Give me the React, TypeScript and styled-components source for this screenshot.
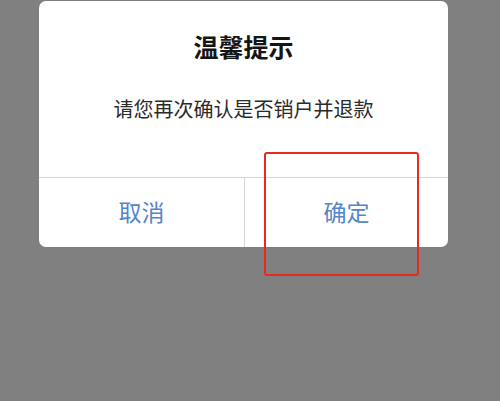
import React from "react";
import styled, { createGlobalStyle } from "styled-components";

const GlobalStyle = createGlobalStyle`
  html, body {
    margin: 0;
    padding: 0;
    background: #808080;
  }
  body {
    font-family: "Noto Sans CJK SC", "Noto Sans", sans-serif;
  }
`;

const Page = styled.div`
  position: relative;
  width: 500px;
  height: 401px;
  background: #808080;
  display: flex;
  justify-content: center;
  align-items: flex-start;
  overflow: hidden;
`;

const Dialog = styled.div`
  margin-top: 1px;
  margin-left: -13px;
  width: 409px;
  background: #ffffff;
  border-radius: 7px;
  display: flex;
  flex-direction: column;
  overflow: hidden;
`;

const Body = styled.div`
  height: 176px;
  display: flex;
  flex-direction: column;
  align-items: center;
  box-sizing: border-box;
  padding-top: 33px;
`;

const Title = styled.div`
  font-size: 25px;
  line-height: 25px;
  font-weight: 600;
  color: #151515;
`;

const Message = styled.div`
  margin-top: 40px;
  font-size: 20px;
  line-height: 20px;
  color: #2a2a2a;
`;

const Footer = styled.div`
  display: grid;
  grid-template-columns: 205px 1fr;
  height: 70px;
  border-top: 1px solid #d6d6d6;
  box-sizing: border-box;
`;

const ActionButton = styled.button<{ $divider?: boolean }>`
  appearance: none;
  background: transparent;
  border: none;
  border-left: ${(p) => (p.$divider ? "1px solid #d6d6d6" : "none")};
  margin: 0;
  padding: 0 0 3px 0;
  font-family: inherit;
  font-size: 23px;
  line-height: 23px;
  color: #5485c8;
  display: flex;
  align-items: center;
  justify-content: center;
  cursor: pointer;
`;

const Highlight = styled.div`
  position: absolute;
  left: 264px;
  top: 152px;
  width: 155px;
  height: 124px;
  box-sizing: border-box;
  border: 2px solid #e8291f;
  border-radius: 3px;
  pointer-events: none;
`;

export default function App() {
  return (
    <>
      <GlobalStyle />
      <Page>
        <Dialog>
          <Body>
            <Title>温馨提示</Title>
            <Message>请您再次确认是否销户并退款</Message>
          </Body>
          <Footer>
            <ActionButton>取消</ActionButton>
            <ActionButton $divider>确定</ActionButton>
          </Footer>
        </Dialog>
        <Highlight />
      </Page>
    </>
  );
}
